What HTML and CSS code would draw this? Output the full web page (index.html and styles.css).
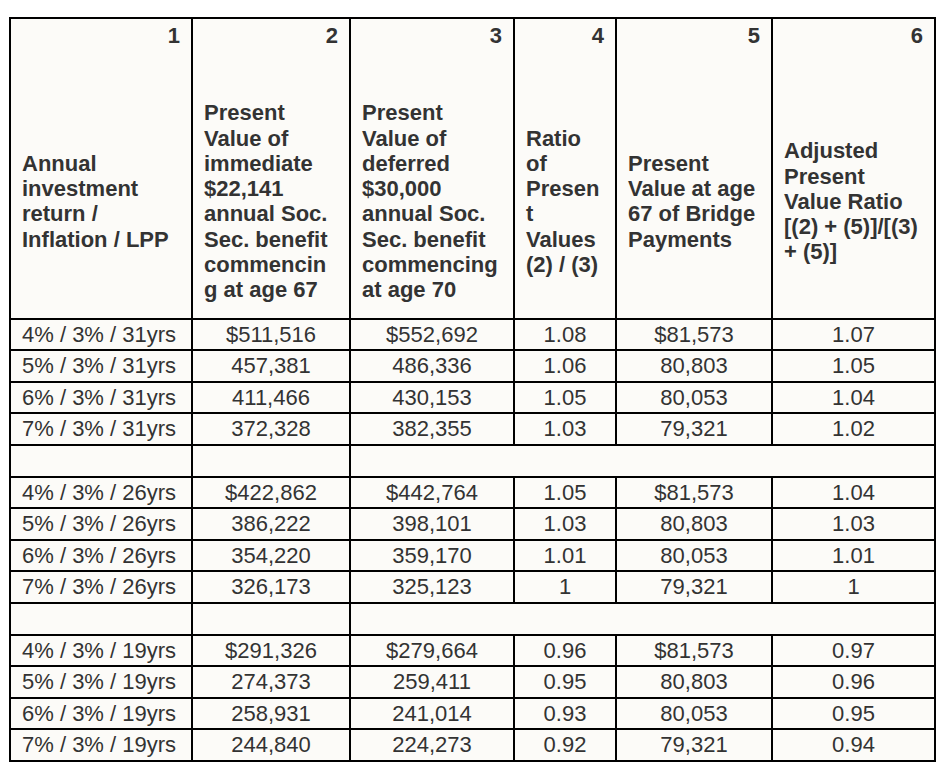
FILE: index.html
```html
<!DOCTYPE html>
<html lang="en">
<head>
  <meta charset="UTF-8" />
  <title>Present Value Comparison</title>
  <link rel="stylesheet" href="styles.css">
</head>
<body>
  <div class="wrap">
    <table class="pv-table">
      <colgroup>
        <col class="c1">
        <col class="c2">
        <col class="c3">
        <col class="c4">
        <col class="c5">
        <col class="c6">
      </colgroup>
      <thead>
        <tr class="nums">
          <th>1</th>
          <th>2</th>
          <th>3</th>
          <th>4</th>
          <th>5</th>
          <th>6</th>
        </tr>
        <tr class="labels">
          <th>Annual investment return / Inflation / LPP</th>
          <th>Present Value of immediate $22,141 annual Soc. Sec. benefit commencing at age 67</th>
          <th>Present Value of deferred $30,000 annual Soc. Sec. benefit commencing at age 70</th>
          <th>Ratio of Present Values (2) / (3)</th>
          <th>Present Value at age 67 of Bridge Payments</th>
          <th>Adjusted Present Value Ratio [(2) + (5)]/[(3) + (5)]</th>
        </tr>
      </thead>
      <tbody>
        <tr><td>4% / 3% / 31yrs</td><td>$511,516</td><td>$552,692</td><td>1.08</td><td>$81,573</td><td>1.07</td></tr>
        <tr><td>5% / 3% / 31yrs</td><td>457,381</td><td>486,336</td><td>1.06</td><td>80,803</td><td>1.05</td></tr>
        <tr><td>6% / 3% / 31yrs</td><td>411,466</td><td>430,153</td><td>1.05</td><td>80,053</td><td>1.04</td></tr>
        <tr><td>7% / 3% / 31yrs</td><td>372,328</td><td>382,355</td><td>1.03</td><td>79,321</td><td>1.02</td></tr>
        <tr class="spacer"><td>&nbsp;</td><td>&nbsp;</td><td colspan="4">&nbsp;</td></tr>
        <tr><td>4% / 3% / 26yrs</td><td>$422,862</td><td>$442,764</td><td>1.05</td><td>$81,573</td><td>1.04</td></tr>
        <tr><td>5% / 3% / 26yrs</td><td>386,222</td><td>398,101</td><td>1.03</td><td>80,803</td><td>1.03</td></tr>
        <tr><td>6% / 3% / 26yrs</td><td>354,220</td><td>359,170</td><td>1.01</td><td>80,053</td><td>1.01</td></tr>
        <tr><td>7% / 3% / 26yrs</td><td>326,173</td><td>325,123</td><td>1</td><td>79,321</td><td>1</td></tr>
        <tr class="spacer"><td>&nbsp;</td><td>&nbsp;</td><td colspan="4">&nbsp;</td></tr>
        <tr><td>4% / 3% / 19yrs</td><td>$291,326</td><td>$279,664</td><td>0.96</td><td>$81,573</td><td>0.97</td></tr>
        <tr><td>5% / 3% / 19yrs</td><td>274,373</td><td>259,411</td><td>0.95</td><td>80,803</td><td>0.96</td></tr>
        <tr><td>6% / 3% / 19yrs</td><td>258,931</td><td>241,014</td><td>0.93</td><td>80,053</td><td>0.95</td></tr>
        <tr><td>7% / 3% / 19yrs</td><td>244,840</td><td>224,273</td><td>0.92</td><td>79,321</td><td>0.94</td></tr>
      </tbody>
    </table>
  </div>
</body>
</html>
```

FILE: styles.css
```css
body {
  margin: 0;
  background: #fff;
  font-family: 'Liberation Sans', Arial, sans-serif;
  color: #333;
}

.wrap {
  padding: 17px 0 0 9px;
}

.pv-table {
  width: 927px;
  table-layout: fixed;
  border-collapse: collapse;
  background-color: #fcfbf8;
  font-size: 22px;
  line-height: 1.15;
}

.c1 { width: 182px; }
.c2 { width: 158px; }
.c3 { width: 164px; }
.c4 { width: 102px; }
.c5 { width: 156px; }
.c6 { width: 163px; }

.pv-table th,
.pv-table td {
  border: 2px solid #000;
  padding: 2px 11px 2.3px;
}

.pv-table th {
  font-weight: bold;
  text-align: left;
  overflow-wrap: break-word;
}

.nums th {
  text-align: right;
  vertical-align: top;
  padding-top: 4px;
  padding-bottom: 0;
  border-bottom: none;
}

.labels th {
  vertical-align: middle;
  padding-top: 52px;
  padding-bottom: 15px;
  border-top: none;
}

.pv-table td {
  text-align: center;
  white-space: nowrap;
}

.pv-table td:first-child {
  text-align: left;
}
```
